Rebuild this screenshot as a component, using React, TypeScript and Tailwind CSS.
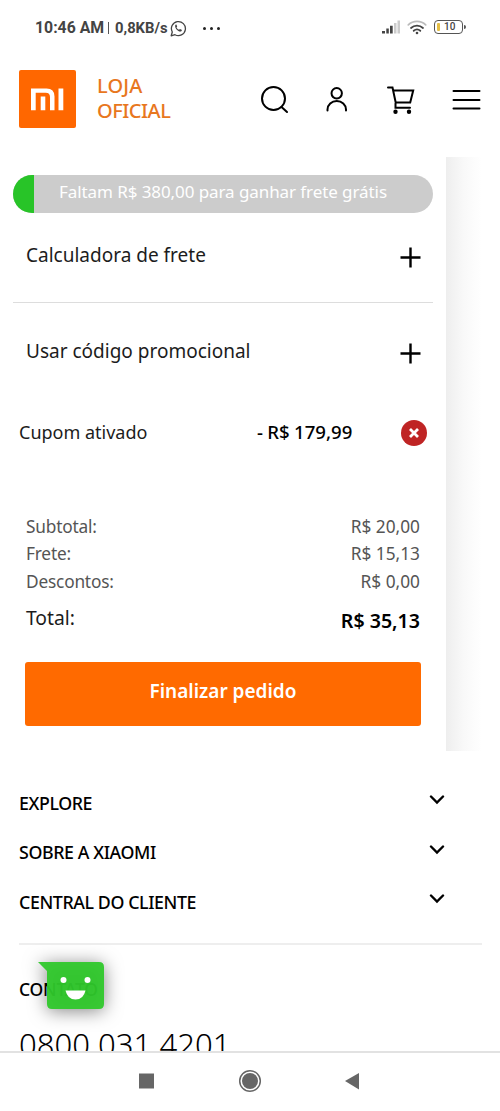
import React from 'react';

const summary = [
  { label: 'Subtotal:', value: 'R$ 20,00' },
  { label: 'Frete:', value: 'R$ 15,13' },
  { label: 'Descontos:', value: 'R$ 0,00' },
];

// --- STATUS BAR ---
const StatusBar: React.FC = () => (
  <div className="h-[57px] flex items-center justify-between pl-[35px] pr-[34px] font-[Roboto,sans-serif] text-[#444]">
    <div className="flex items-center -mt-px">
      <span className="text-[15.8px] font-bold leading-none w-[70px] whitespace-nowrap">10:46 AM</span>
      <span className="w-px h-[12px] bg-[#555] ml-[3px] mr-[6px]" />
      <span className="text-[14.8px] font-bold leading-none w-[52px] whitespace-nowrap">0,8KB/s</span>
      <svg className="ml-[3px]" width="17" height="17" viewBox="0 0 17 17" fill="none" stroke="#444" strokeWidth="1.3">
        <path d="M1.2 15.8 2.3 12A7 7 0 1 1 5 14.7Z" strokeLinejoin="round" />
        <path d="M5.2 5.2c.4-.8 1.1-.8 1.4-.2l.6 1.4-.7 1c.6 1.1 1.4 1.9 2.5 2.4l1-.8 1.6.8c.6.4.2 1.2-.6 1.6-2.4.8-6.5-3.2-5.8-6.2Z" fill="#444" stroke="none" />
      </svg>
      <span className="flex gap-[4px] ml-[16px]">
        <i className="size-[3px] rounded-full bg-[#222]" />
        <i className="size-[3px] rounded-full bg-[#222]" />
        <i className="size-[3px] rounded-full bg-[#222]" />
      </span>
    </div>
    <div className="flex items-center -mt-[3px]">
      <svg width="20" height="14" viewBox="0 0 20 14">
        <path d="M1 11h3v2.5H1zM5.3 8.5h2.5v5H5.3zM9 5.8h2.7v7.7H9z" fill="#444" />
        <path d="M13 3h2.5v10.5H13zM16.5.5H19v13h-2.5z" fill="#ccc" />
      </svg>
      <svg className="ml-[6px]" width="20" height="15" viewBox="0 0 20 15" fill="none" strokeWidth="1.8" strokeLinecap="round">
        <path d="M1.3 4.9a12.5 12.5 0 0 1 17.4 0" stroke="#bbb" />
        <path d="M4 8a8.8 8.8 0 0 1 12 0M6.7 10.8a5 5 0 0 1 6.6 0" stroke="#444" />
        <circle cx="10" cy="13" r="1.3" fill="#444" />
      </svg>
      <div className="ml-[7px] w-[29px] h-[14px] rounded-[4px] border-[1.5px] border-[#555] flex items-center">
        <span className="ml-[2px] w-[3px] h-[8px] rounded-[1px] bg-[#e5bf45]" />
        <span className="ml-[4px] text-[10px] leading-none font-medium">10</span>
      </div>
      <span className="ml-px w-[2px] h-[4px] rounded-r bg-[#555]" />
    </div>
  </div>
);

// --- HEADER ---
const Header: React.FC = () => (
  <header className="h-[100px] pt-[13px] pl-[19px] pr-[19px] flex items-start justify-between">
    <div className="flex">
      <div className="w-[57px] h-[58px] rounded-[2px] bg-[#ff6700]">
        <svg width="57" height="58" viewBox="0 0 57 58">
          <path d="M12 18.5h15.5q8 0 8 8V40.3H31V27q0-4.3-4.3-4.3h-10V40.3H12ZM21.7 26.5h4.6v13.8h-4.6ZM39.500 18.5h4.8v21.8h-4.8Z" fill="#fff" />
        </svg>
      </div>
      <div className="ml-[21px] mt-[4px] flex flex-col text-[20px] leading-[24.5px] font-medium text-[#e8771e]">
        <span className="tracking-[0.2px]">LOJA</span>
        <span className="tracking-[-0.5px]">OFICIAL</span>
      </div>
    </div>
    <svg className="mt-[13px]" width="222" height="34" viewBox="0 0 222 34" fill="none" stroke="#000" strokeWidth="2" strokeLinecap="round">
      <circle cx="14.5" cy="15.5" r="11.5" />
      <path d="m22.5 24 5.5 5" />
      <circle cx="77.7" cy="10.3" r="5.2" />
      <path d="M68.5 27.5v-1a9.2 8.5 0 0 1 18.5 0v1" />
      <path d="M129 4.5h4.5l3.2 15h14.5l3-12H135M136.5 20.5v4.2h14.5" />
      <circle cx="136.5" cy="28.7" r="1.2" fill="#000" />
      <circle cx="150" cy="28.7" r="1.2" fill="#000" />
      <path d="M194.5 8h26M194.5 17h26M194.5 25.5h26" />
    </svg>
  </header>
);

const Plus: React.FC = () => (
  <svg width="21" height="21" viewBox="0 0 21 21" stroke="#000" strokeWidth="2.4">
    <path d="M.5 10.5h20M10.5.5v20" />
  </svg>
);

const FooterLink: React.FC<{ label: string }> = ({ label }) => (
  <div className="h-[49.5px] flex items-center justify-between pr-[54px]">
    <span className="text-[17.8px] font-medium tracking-[-0.4px] mt-px">{label}</span>
    <svg className="-mt-[5px]" width="17" height="10" viewBox="0 0 17 10" fill="none" stroke="#000" strokeWidth="2.4" strokeLinecap="round">
      <path d="m2 1.5 6 6 6-6" />
    </svg>
  </div>
);

// --- CART ---
const Cart: React.FC = () => (
  <main className="flex h-[594px]">
    <div className="w-[446px] px-[13px] pt-[18px]">
      <div className="h-[38px] rounded-full bg-[#ccc] overflow-hidden flex">
        <div className="w-[21px] bg-[#28c428]" />
        <span className="ml-[25px] mt-[5px] text-[17px] leading-[24px] tracking-[-0.08px] text-white whitespace-nowrap">
          Faltam R$ 380,00 para ganhar frete grátis
        </span>
      </div>
      <div className="h-[90px] pl-[13px] pr-[12px] flex items-center justify-between border-b border-[#ddd]">
        <span className="text-[19px] -mt-[5px]">Calculadora de frete</span>
        <Plus />
      </div>
      <div className="h-[101px] pl-[13px] pr-[12px] flex items-center justify-between">
        <span className="text-[19px] -mt-[4px]">Usar código promocional</span>
        <Plus />
      </div>
      <div className="mt-px h-[56px] pl-[6px] pr-[6px] flex items-center">
        <span className="text-[18px] w-[238px] -mt-[2px]">Cupom ativado</span>
        <span className="text-[18.6px] font-medium text-black -mt-[3px] [word-spacing:-0.5px]">- R$ 179,99</span>
        <span className="ml-auto size-[26px] rounded-full bg-[#bf2424] flex items-center justify-center">
          <svg width="10" height="10" viewBox="0 0 10 10" stroke="#fff" strokeWidth="2.8">
            <path d="m1 1 8 8M9 1 1 9" />
          </svg>
        </span>
      </div>
      <div className="mt-[52px] pl-[13px] pr-[13px]">
        {summary.map(row => (
          <div key={row.label} className="h-[27.5px] flex items-center justify-between text-[17.3px] text-[#555]">
            <span className="tracking-[-0.2px]">{row.label}</span>
            <span>{row.value}</span>
          </div>
        ))}
        <div className="h-[45px] flex items-center justify-between">
          <span className="text-[19.3px] mt-px">Total:</span>
          <span className="text-[19.6px] font-semibold text-black mt-[6px]">R$ 35,13</span>
        </div>
      </div>
      <button className="mx-[12px] mt-[21px] w-[396px] h-[64px] pb-[4px] rounded-[3px] bg-[#ff6a00] text-white text-[19px] font-semibold">
        Finalizar pedido
      </button>
    </div>
    <div className="w-[36px] bg-gradient-to-r from-[#eee] via-[#f9f9f9] to-white" />
  </main>
);

// --- ANDROID NAVIGATION ---
const NavBar: React.FC = () => (
  <nav className="h-[60px] border-t-2 border-[#e2e2e2] bg-white">
    <svg width="500" height="58" viewBox="0 0 500 58" fill="#666">
      <path d="M139 20.5h15v15h-15z" />
      <circle cx="250" cy="28" r="10.3" fill="none" stroke="#666" strokeWidth="1.5" />
      <circle cx="250" cy="28" r="8" />
      <path d="M345 28 359 20v16.5Z" />
    </svg>
  </nav>
);

export default function App() {
  return (
    <div className="w-[500px] h-[1111px] flex flex-col overflow-hidden bg-white text-[#1c1c1c] font-['Noto_Sans',sans-serif]">
      <StatusBar />
      <Header />
      <Cart />
      <footer className="relative h-[300px] overflow-hidden pl-[19px] pt-[27px] text-black">
        <FooterLink label="EXPLORE" />
        <FooterLink label="SOBRE A XIAOMI" />
        <FooterLink label="CENTRAL DO CLIENTE" />
        <div className="mt-[16px] w-[463px] h-[2px] bg-[#eee]" />
        <p className="mt-[31px] text-[17.5px] leading-[26px] font-medium tracking-[-0.2px]">CONTATO</p>
        <p className="mt-[21px] text-[31.1px] leading-[42px] font-light whitespace-nowrap">0800 031 4201</p>
        {/* chat bubble */}
        <svg className="absolute left-[38px] top-[210px] overflow-visible drop-shadow-[0_2px_9px_rgba(0,0,0,0.5)]" width="67" height="50" viewBox="0 0 67 50">
          <path d="M0 1h61q5 0 5 5v37q0 5-5 5H14q-5 0-5-5V10Z" fill="#2fc82b" fillOpacity=".95" />
          <circle cx="25.5" cy="19" r="3" fill="#fff" />
          <circle cx="49.5" cy="19" r="3" fill="#fff" />
          <path d="M27.5 29.5h20q-2 9-10 9t-10-9Z" fill="#fff" />
        </svg>
      </footer>
      <NavBar />
    </div>
  );
}
